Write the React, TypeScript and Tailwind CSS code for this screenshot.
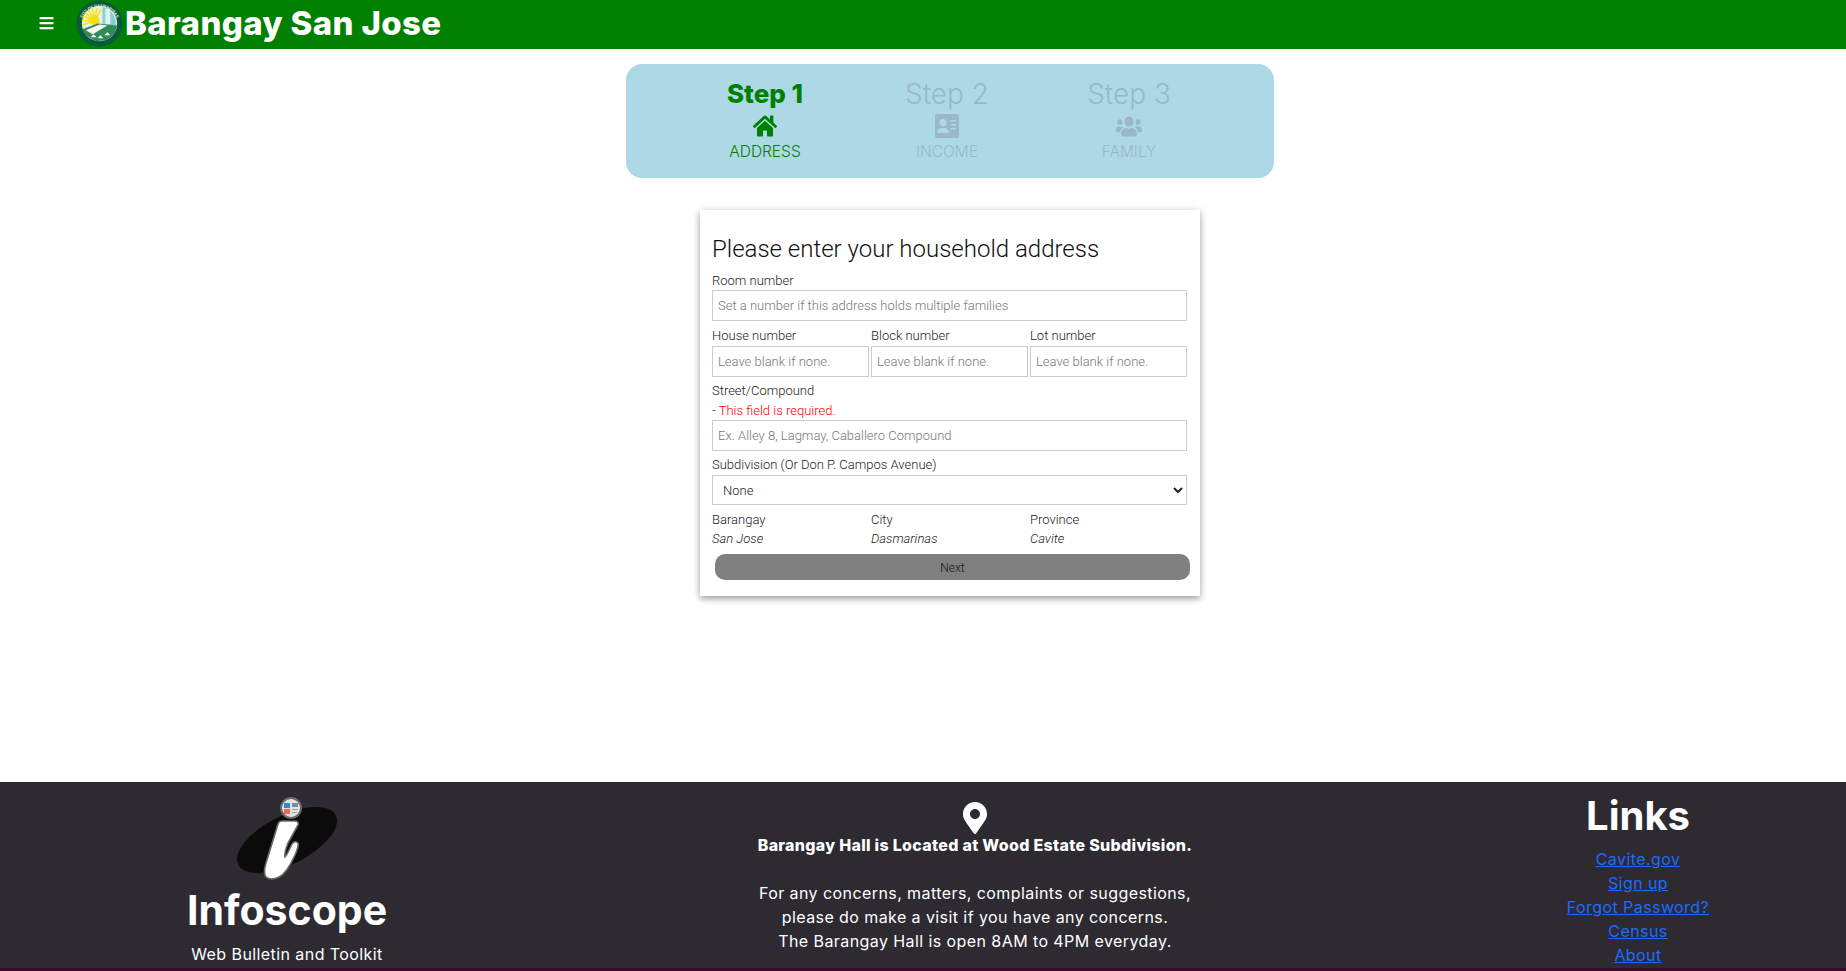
import { FaBars, FaHome, FaUsers, FaMapMarkerAlt } from "react-icons/fa";

const poppins = "font-['Inter','Noto_Sans',sans-serif]";
const roboto = "font-['Roboto','Liberation_Sans',sans-serif]";

function Seal() {
  const rays = [200, 220, 240, 260, 280, 300, 180, 160];
  return (
    <svg viewBox="0 0 48 48" className="h-[47px] w-[47px] shrink-0">
      <circle cx="24" cy="24" r="23.5" fill="#0b5a3e" />
      <path id="seal-top" d="M5 26a19 19 0 0 1 38 0" fill="none" />
      <path id="seal-bottom" d="M8 32a18 18 0 0 0 32 0" fill="none" />
      <text fontSize="4" fontWeight="700" fill="#dfeee0" fontFamily="Liberation Sans, sans-serif">
        <textPath href="#seal-top" startOffset="50%" textAnchor="middle">
          CITY OF DASMARIÑAS
        </textPath>
      </text>
      <text fontSize="3" fontWeight="700" fill="#dfeee0" fontFamily="Liberation Sans, sans-serif">
        <textPath href="#seal-bottom" startOffset="50%" textAnchor="middle">
          PROVINCE OF CAVITE
        </textPath>
      </text>
      <circle cx="24" cy="24" r="18" fill="#e9f3e2" />
      <path d="M27 7l8 3 5 8 1 8H27z" fill="#8ccfd0" />
      <path d="M30 9h5v16h-5z" fill="#dff2f1" />
      <g stroke="#f6e019" strokeWidth="1.7">
        {rays.map((a) => (
          <line
            key={a}
            x1="19"
            y1="21"
            x2={19 + 13 * Math.cos((a * Math.PI) / 180)}
            y2={21 + 13 * Math.sin((a * Math.PI) / 180)}
          />
        ))}
      </g>
      <circle cx="19" cy="21" r="5" fill="#f8dc14" />
      <path d="M6 30l16-6 20 2-3 9-8 6-11 1-10-6z" fill="#2e8b57" />
      <path d="M10 31l14-6 8 1-15 9z" fill="#f5f8ee" />
      <path d="M15 38l3-3 3 3zM22 39l3-3 3 3zM29 36l3-3 3 3z" fill="#ffffff" />
    </svg>
  );
}

function InfoscopeLogo() {
  return (
    <svg viewBox="0 0 104 86" className="h-[86px] w-[104px]">
      <ellipse cx="52" cy="43" rx="54.7" ry="24.4" fill="#0b0b0b" transform="rotate(-27 52 43)" />
      <path
        d="M43 27Q44 24 47 24L60 24Q64 24 63 28L53 46Q49 56 50 60Q52 58 57 47Q60 43 63 46Q64 49 60 58Q52 76 44 80Q36 84 31 80Q28 76 31 66Z"
        fill="#ffffff"
        stroke="#6a6a6a"
        strokeWidth="1.6"
      />
      <circle cx="56" cy="11" r="10" fill="#dfe3e8" stroke="#6a6a6a" strokeWidth="2" />
      <path d="M49 6h6v5h-6z" fill="#2b8fc9" />
      <path d="M49 12h6v5h-6z" fill="#ee6a4d" />
      <path d="M57 6h6v4h-6z" fill="#7a8d99" />
      <path d="M57 12h6v1h-6zM57 15h5v1h-5z" fill="#9aa5ad" />
    </svg>
  );
}

function IdIcon() {
  return (
    <svg viewBox="0 0 24 24" className="h-[24px] w-[24px]" fill="currentColor">
      <path
        fillRule="evenodd"
        d="M2 0h20a2 2 0 0 1 2 2v20a2 2 0 0 1-2 2H2a2 2 0 0 1-2-2V2a2 2 0 0 1 2-2zM8 5a3.6 3.6 0 1 0 0 7.2A3.6 3.6 0 0 0 8 5zM2.6 19h10.8c.5 0 .7-.3.6-.8-.4-2.4-2-4.2-4-4.2H6c-2 0-3.600 1.800-4 4.200-.1.5.1.8.6.8zM15.500 6v1.600H21V6zM15.500 10v1.600H21V10zM15.500 14v1.600H21V14z"
      />
    </svg>
  );
}

function Step({ title, label, active, icon }: { title: string; label: string; active?: boolean; icon: React.ReactNode }) {
  return (
    <div className={`flex w-[180px] flex-col items-center ${poppins} ${active ? "text-[#008000]" : "text-[#9ab8c8]"}`}>
      <div className={`leading-[34px] ${active ? "text-[26px] font-extrabold" : "text-[28px] font-light"}`}>{title}</div>
      <div className="mt-[2px] flex h-[26px] items-center">{icon}</div>
      <div className="mt-[2px] text-[15.500px] font-light leading-[22px]">{label}</div>
    </div>
  );
}

function Field({ label, placeholder, wide }: { label: string; placeholder: string; wide?: boolean }) {
  return (
    <label className="flex min-w-0 flex-1 flex-col">
      <span className="text-[13px] font-light leading-[14px] text-[#222]">{label}</span>
      <input
        placeholder={placeholder}
        className={`${wide ? "mt-[2px]" : "mt-[3px]"} h-[31px] w-full border border-[#cccccc] bg-white px-[5px] text-[13px] font-light outline-none placeholder:text-[#777]`}
      />
    </label>
  );
}

function Info({ label, value }: { label: string; value: string }) {
  return (
    <div className="flex-1 text-[13px] font-light leading-[19px] text-[#222]">
      <div>{label}</div>
      <div className="italic">{value}</div>
    </div>
  );
}

export default function App() {
  return (
    <div className="flex h-[971px] flex-col overflow-hidden bg-white">
      <header className="flex h-[49px] shrink-0 items-center bg-[#008000] pb-[3px] pl-[39px] text-white">
        <FaBars className="h-[16px] w-[15px]" />
        <div className="ml-[22px]">
          <Seal />
        </div>
        <h1 className={`ml-[2px] text-[33px] font-extrabold leading-none tracking-[0.35px] ${poppins}`}>Barangay San Jose</h1>
      </header>

      <main className="flex flex-1 flex-col items-center pl-[54px] pt-[15px]">
        <div className="flex h-[114px] w-[648px] justify-center rounded-[16px] bg-[#add8e6] pt-[13px]">
          <div className="mr-[6px] flex gap-[2px]">
            <Step title="Step 1" label="ADDRESS" active icon={<FaHome preserveAspectRatio="none" className="h-[24px] w-[24px]" />} />
            <Step title="Step 2" label="INCOME" icon={<IdIcon />} />
            <Step title="Step 3" label="FAMILY" icon={<FaUsers preserveAspectRatio="none" className="h-[23px] w-[26px]" />} />
          </div>
        </div>

        <form className={`mt-[32px] flex h-[386px] w-[500px] flex-col bg-white pl-[12px] pr-[13px] pt-[24px] shadow-[0_3px_6px_rgba(0,0,0,0.32),0_0_10px_rgba(0,0,0,0.1)] ${roboto}`}>
          <h2 className="text-[24px] font-light leading-[30px] text-[#111]">Please enter your household address</h2>
          <div className="mt-[10px]">
            <Field wide label="Room number" placeholder="Set a number if this address holds multiple families" />
          </div>
          <div className="mt-[8px] flex gap-[2px]">
            <Field label="House number" placeholder="Leave blank if none." />
            <Field label="Block number" placeholder="Leave blank if none." />
            <Field label="Lot number" placeholder="Leave blank if none." />
          </div>
          <div className="mt-[7px] text-[13px] font-light leading-[14px] text-[#222]">Street/Compound</div>
          <div className="mt-[6px] text-[13px] font-light leading-[14px] text-[#222]">
            - <span className="text-[#ff0000]">This field is required.</span>
          </div>
          <input
            placeholder="Ex. Alley 8, Lagmay, Caballero Compound"
            className="mt-[2px] h-[31px] w-full border border-[#cccccc] bg-white px-[5px] text-[13px] font-light outline-none placeholder:text-[#777]"
          />
          <div className="mt-[7px] text-[13px] font-light leading-[14px] text-[#222]">Subdivision (Or Don P. Campos Avenue)</div>
          <select className="mt-[3px] h-[30px] w-full border border-[#cccccc] bg-white px-[6px] text-[13px] font-light text-[#222] outline-none [appearance:auto]">
            <option>None</option>
          </select>
          <div className="mt-[5px] flex gap-[2px]">
            <Info label="Barangay" value="San Jose" />
            <Info label="City" value="Dasmarinas" />
            <Info label="Province" value="Cavite" />
          </div>
          <button type="button" className="ml-[3px] mt-[6px] h-[26px] w-[475px] shrink-0 rounded-[10px] bg-[#808080] pt-[1px] text-[12px] font-light text-[#111]">
            Next
          </button>
        </form>
      </main>

      <footer className={`flex h-[186px] shrink-0 bg-[#2d2a32] text-white ${poppins}`}>
        <div className="flex w-[574px] flex-col items-center pt-[15px]">
          <InfoscopeLogo />
          <div className="mt-[5px] text-[41px] font-bold leading-[44px]">Infoscope</div>
          <div className="mt-[10px] text-[16px] leading-[24px] tracking-[0.42px]">Web Bulletin and Toolkit</div>
        </div>
        <div className="flex w-[802px] flex-col items-center pt-[20px] text-center text-[16px] leading-[24px] tracking-[0.42px]">
          <FaMapMarkerAlt className="-mb-[1px] h-[32px] w-[24px]" />
          <div className="font-extrabold tracking-[0.3px]">Barangay Hall is Located at Wood Estate Subdivision.</div>
          <div className="mt-[24px]">For any concerns, matters, complaints or suggestions,</div>
          <div>please do make a visit if you have any concerns.</div>
          <div>The Barangay Hall is open 8AM to 4PM everyday.</div>
        </div>
        <div className="ml-[54px] flex w-[416px] flex-col items-center pt-[9px] text-[16px] leading-[24px] tracking-[0.42px]">
          <div className="text-[40px] font-bold leading-[50px] tracking-normal">Links</div>
          <div className="mt-[6px] flex flex-col items-center">
            {["Cavite.gov", "Sign up", "Forgot Password?", "Census", "About"].map((l) => (
              <a key={l} href="#" className="text-[#1f6bff] underline">
                {l}
              </a>
            ))}
          </div>
        </div>
      </footer>
      <div className="h-[3px] shrink-0 bg-[#3a0a2a]" />
    </div>
  );
}
